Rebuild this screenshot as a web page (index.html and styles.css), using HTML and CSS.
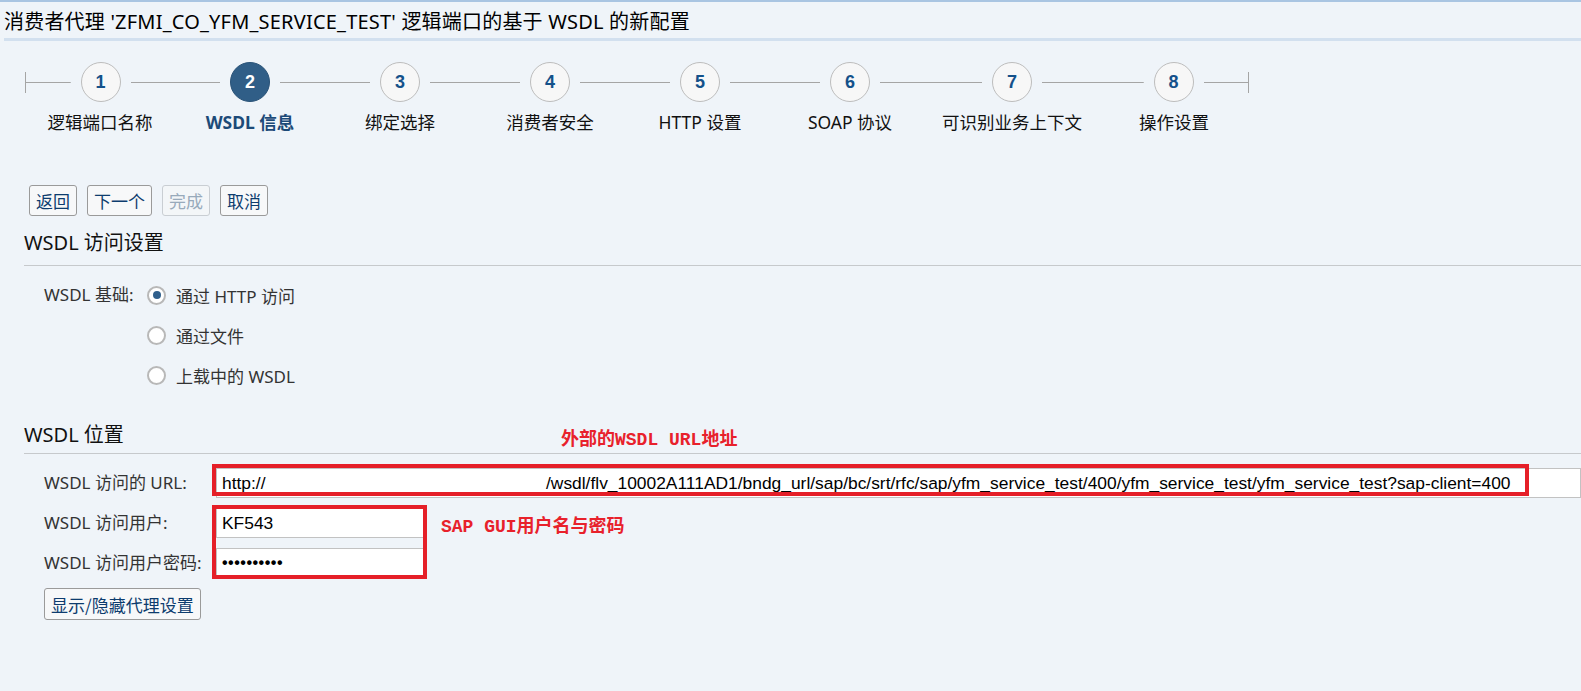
FILE: index.html
```html
<!DOCTYPE html>
<html lang="zh">
<head>
<meta charset="utf-8">
<title>WSDL 新配置</title>
<link rel="stylesheet" href="styles.css">
</head>
<body>
<div class="topline"></div>
<div class="header">消费者代理 'ZFMI_CO_YFM_SERVICE_TEST' 逻辑端口的基于 WSDL 的新配置</div>

<div class="stepper">
  <div class="step"><div class="crow"><span class="line"></span><span class="circle">1</span><span class="line"></span></div><div class="slabel">逻辑端口名称</div></div>
  <div class="step active"><div class="crow"><span class="line"></span><span class="circle">2</span><span class="line"></span></div><div class="slabel">WSDL 信息</div></div>
  <div class="step"><div class="crow"><span class="line"></span><span class="circle">3</span><span class="line"></span></div><div class="slabel">绑定选择</div></div>
  <div class="step"><div class="crow"><span class="line"></span><span class="circle">4</span><span class="line"></span></div><div class="slabel">消费者安全</div></div>
  <div class="step"><div class="crow"><span class="line"></span><span class="circle">5</span><span class="line"></span></div><div class="slabel">HTTP 设置</div></div>
  <div class="step"><div class="crow"><span class="line"></span><span class="circle">6</span><span class="line"></span></div><div class="slabel">SOAP 协议</div></div>
  <div class="step"><div class="crow"><span class="line"></span><span class="circle">7</span><span class="line"></span></div><div class="slabel">可识别业务上下文</div></div>
  <div class="step"><div class="crow"><span class="line"></span><span class="circle">8</span><span class="line"></span></div><div class="slabel">操作设置</div></div>
</div>

<div class="buttons">
  <button class="btn">返回</button>
  <button class="btn">下一个</button>
  <button class="btn disabled">完成</button>
  <button class="btn">取消</button>
</div>

<div class="section">
  <div class="sec-title">WSDL 访问设置</div>
  <div class="radio-group">
    <div class="rg-label">WSDL 基础:</div>
    <div class="rg-options">
      <div class="opt"><span class="radio checked"></span><span>通过 HTTP 访问</span></div>
      <div class="opt"><span class="radio"></span><span>通过文件</span></div>
      <div class="opt"><span class="radio"></span><span>上载中的 WSDL</span></div>
    </div>
  </div>
</div>

<div class="section sec2">
  <div class="sec-title">WSDL 位置</div>
  <div class="annot annot-url">外部的WSDL URL地址</div>
  <div class="form">
    <div class="flabel">WSDL 访问的 URL:</div>
    <div class="input url"><span class="url-head">http://</span><span>/wsdl/flv_10002A111AD1/bndg_url/sap/bc/srt/rfc/sap/yfm_service_test/400/yfm_service_test/yfm_service_test?sap-client=400</span></div>
    <div class="redbox redbox-url"></div>

    <div class="flabel">WSDL 访问用户:</div>
    <div class="input short">KF543</div>

    <div class="flabel">WSDL 访问用户密码:</div>
    <div class="input short pw">••••••••••</div>
    <div class="redbox redbox-user"></div>
    <div class="annot annot-user">SAP GUI用户名与密码</div>
  </div>
  <button class="btn proxy">显示/隐藏代理设置</button>
</div>
</body>
</html>
```

FILE: styles.css
```css
html, body {
  margin: 0;
  padding: 0;
}
body {
  background: #eff4f9;
  font-family: "Noto Sans", "Noto Sans CJK SC", sans-serif;
  color: #000;
  width: 1581px;
  height: 691px;
  overflow: hidden;
}
.topline {
  height: 2px;
  background: #a9c5e2;
}
.header {
  margin-left: 4px;
  height: 32px;
  padding-top: 4px;
  line-height: 32px;
  font-size: 20px;
  letter-spacing: 0.2px;
  white-space: nowrap;
  border-bottom: 3px solid #d2e0ef;
}

/* stepper */
.stepper {
  display: flex;
  margin: 21px 0 0 25px;
}
.step {
  min-width: 150px;
  display: flex;
  flex-direction: column;
  align-items: stretch;
}
.crow {
  display: flex;
  align-items: center;
  height: 40px;
}
.line {
  flex: 1;
  height: 21px;
  background: linear-gradient(#a5a5a5, #a5a5a5) center / 100% 1px no-repeat;
}
.step:first-child .line:first-child {
  border-left: 1px solid #a5a5a5;
}
.step:last-child .line:last-child {
  border-right: 1px solid #a5a5a5;
}
.circle {
  box-sizing: border-box;
  width: 40px;
  height: 40px;
  margin: 0 10px;
  border: 1px solid #bdbdbd;
  border-radius: 50%;
  background: #f7f7f7;
  display: flex;
  align-items: center;
  justify-content: center;
  font-family: "Liberation Sans", "Noto Sans", sans-serif;
  font-weight: bold;
  font-size: 18px;
  color: #14518a;
}
.step.active .circle {
  background: #305e87;
  border-color: #2a5378;
  color: #fff;
}
.slabel {
  margin-top: 8px;
  line-height: 24px;
  font-size: 17.5px;
  text-align: center;
  padding: 0 17px;
  white-space: nowrap;
  color: #111;
}
.step.active .slabel {
  font-weight: bold;
  color: #1c4a78;
}

/* buttons */
.buttons {
  display: flex;
  gap: 10px;
  margin: 51px 0 0 29px;
}
.btn {
  box-sizing: border-box;
  height: 31px;
  padding: 0 6px;
  border: 1px solid #9a9a9a;
  border-radius: 3px;
  background: #f7f8f9;
  font-family: "Noto Sans CJK SC", "Noto Sans", sans-serif;
  font-size: 17px;
  line-height: 29px;
  color: #0d3c6e;
}
.btn.disabled {
  border-color: #c9ced3;
  color: #98aabb;
  background: #f3f6f8;
}

/* sections */
.section {
  margin-left: 24px;
  margin-top: 13px;
  position: relative;
}
.sec2 {
  margin-top: 26px;
}
.sec-title {
  font-size: 20px;
  line-height: 28px;
  padding-bottom: 8px;
  border-bottom: 1px solid #c6c9cc;
  color: #111;
}
.sec2 .sec-title {
  padding-bottom: 4px;
}
.radio-group {
  display: flex;
  margin-top: 9px;
  padding-left: 20px;
}
.rg-label {
  font-size: 17px;
  line-height: 40px;
  color: #333;
  width: 103px;
}
.opt {
  display: flex;
  align-items: center;
  height: 40px;
  font-size: 17px;
  color: #333;
}
.radio {
  box-sizing: border-box;
  width: 19px;
  height: 19px;
  border: 2px solid #b8b8b8;
  border-radius: 50%;
  background: #fff;
  margin-right: 10px;
  display: flex;
  align-items: center;
  justify-content: center;
}
.radio.checked::after {
  content: "";
  width: 8px;
  height: 8px;
  border-radius: 50%;
  background: #2f5f8c;
}

/* form */
.form {
  position: relative;
  display: grid;
  grid-template-columns: 172px 1fr;
  row-gap: 10px;
  margin-top: 14px;
  padding-left: 20px;
}
.flabel {
  font-size: 17px;
  line-height: 30px;
  color: #333;
  white-space: nowrap;
}
.input {
  box-sizing: border-box;
  height: 30px;
  border: 1px solid #c2c2c2;
  background: #fff;
  padding-left: 5px;
  font-family: "Liberation Sans", "Noto Sans", sans-serif;
  font-size: 17.4px;
  line-height: 28px;
  color: #000;
  white-space: nowrap;
  overflow: hidden;
}
.input.short {
  width: 208px;
}
.input.pw {
  font-weight: bold;
  font-size: 16px;
  letter-spacing: 0.5px;
}
.url-head {
  display: inline-block;
  width: 324px;
}
.redbox {
  position: absolute;
  box-sizing: border-box;
  border: 4px solid #e51f28;
  pointer-events: none;
}
.redbox-url {
  grid-column: 2 / 3;
  grid-row: 1 / 2;
  left: -4px;
  top: -4px;
  right: 52px;
  bottom: 2px;
}
.redbox-user {
  grid-column: 2 / 3;
  grid-row: 2 / 4;
  left: -4px;
  top: -3px;
  width: 215px;
  bottom: -1px;
}
.annot {
  position: absolute;
  font-family: "Liberation Mono", "Noto Sans CJK SC", monospace;
  font-weight: bold;
  font-size: 18px;
  line-height: 24px;
  color: #e8212b;
  white-space: nowrap;
}
.annot-url {
  left: 537px;
  top: 7px;
}
.annot-user {
  left: 417px;
  top: 47px;
}
.btn.proxy {
  height: 32px;
  margin: 10px 0 0 20px;
  padding: 0 6px;
}
```
